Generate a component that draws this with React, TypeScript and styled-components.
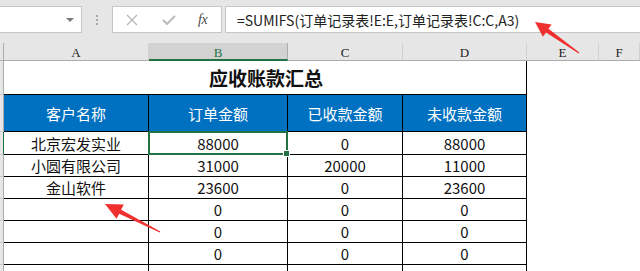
import React from 'react';
import styled, { createGlobalStyle } from 'styled-components';

const Global = createGlobalStyle`
  html, body { margin: 0; padding: 0; background: #fff; }
  body { font-family: "Noto Sans CJK SC", "Noto Sans", sans-serif; overflow: hidden; }
  * { box-sizing: border-box; }
`;

const COLS = '4px 145px 139px 115px 124px 72px 1fr';
const GREEN = '#217346';

const Page = styled.div`
  position: relative;
  width: 640px;
  height: 271px;
  overflow: hidden;
  background: #fff;
`;

const Toolbar = styled.div`
  height: 43px;
  background: #e6e6e6;
  display: flex;
  align-items: flex-start;
  padding-top: 6px;
`;

const NameBox = styled.div`
  width: 82px;
  height: 27px;
  background: #fff;
  border: 1px solid #c6c6c6;
  border-left: none;
  display: flex;
  align-items: center;
  justify-content: flex-end;
  padding-right: 7px;
`;

const Caret = styled.span`
  width: 0;
  height: 0;
  border-left: 4px solid transparent;
  border-right: 4px solid transparent;
  border-top: 4px solid #7a7a7a;
  margin-top: 1px;
`;

const Dots = styled.div`
  width: 30px;
  height: 27px;
  display: flex;
  flex-direction: column;
  align-items: center;
  justify-content: center;
  gap: 2px;
  & > span {
    width: 2px;
    height: 2px;
    background: #a6a6a6;
  }
`;

const FxBox = styled.div`
  width: 110px;
  height: 27px;
  background: #fff;
  border: 1px solid #c6c6c6;
  display: flex;
  align-items: center;
  padding-left: 13px;
`;

const FxBtn = styled.span<{ $w: number }>`
  width: ${(p) => p.$w}px;
  display: flex;
  align-items: center;
  justify-content: flex-start;
`;

const FxLabel = styled.span`
  font-family: "Liberation Serif", "DejaVu Serif", serif;
  font-style: italic;
  font-size: 14px;
  color: #4a4a4a;
  letter-spacing: -0.5px;
  margin-left: 2px;
`;

const FormulaInput = styled.div`
  flex: 1;
  height: 27px;
  margin-left: 3px;
  background: #fff;
  border: 1px solid #c6c6c6;
  border-right: none;
  display: flex;
  align-items: center;
  padding-left: 11px;
  font-size: 14px;
  color: #222;
  white-space: nowrap;
`;

const GridRow = styled.div<{ $h: number }>`
  display: grid;
  grid-template-columns: ${COLS};
  height: ${(p) => p.$h}px;
`;

const Corner = styled.div`
  background: #e6e6e6;
  border-right: 1px solid #ababab;
  border-bottom: 1px solid #ababab;
`;

const ColHead = styled.div<{ $sel?: boolean }>`
  background: ${(p) => (p.$sel ? '#d2d2d2' : '#e6e6e6')};
  border-right: 1px solid ${(p) => (p.$sel ? '#ababab' : '#d0d0d0')};
  border-bottom: ${(p) => (p.$sel ? `2px solid ${GREEN}` : '1px solid #ababab')};
  color: ${(p) => (p.$sel ? GREEN : '#222')};
  font-family: "Liberation Serif", "DejaVu Serif", serif;
  font-size: 13px;
  display: flex;
  align-items: center;
  justify-content: center;
  line-height: 1;
  padding-top: ${(p) => (p.$sel ? 2 : 1)}px;
`;

const RowHead = styled.div<{ $active?: boolean }>`
  background: #e6e6e6;
  border-right: 1px solid ${(p) => (p.$active ? GREEN : '#ababab')};
  border-bottom: 1px solid #c8c8c8;
`;

const TitleCell = styled.div`
  grid-column: span 4;
  border-right: 1px solid #000;
  border-bottom: 1px solid #000;
  display: flex;
  align-items: center;
  justify-content: center;
  font-size: 19px;
  font-weight: 700;
  color: #111;
  padding-left: 2px;
`;

const HeadCell = styled.div`
  background: #0070c0;
  border-right: 1px solid #000;
  border-bottom: 1px solid #000;
  color: #fff;
  font-size: 15px;
  display: flex;
  align-items: center;
  justify-content: center;
`;

const Cell = styled.div<{ $sel?: boolean }>`
  position: relative;
  border-right: 1px solid #000;
  border-bottom: 1px solid #000;
  font-size: 15px;
  color: #111;
  display: flex;
  align-items: center;
  justify-content: center;
  line-height: 1;
  ${(p) =>
    p.$sel &&
    `
    &::after {
      content: '';
      position: absolute;
      left: -1px;
      top: -1px;
      right: -1px;
      bottom: -1px;
      border: 2px solid ${GREEN};
    }
  `}
`;

const Handle = styled.span`
  position: absolute;
  right: -3px;
  bottom: -3px;
  width: 5px;
  height: 5px;
  background: ${GREEN};
  border: 1px solid #fff;
  box-sizing: content-box;
  z-index: 2;
`;

const Blank = styled.div``;

const Overlay = styled.svg`
  position: absolute;
  left: 0;
  top: 0;
  pointer-events: none;
`;

function arrowPoints(tx: number, ty: number, sx: number, sy: number, headLen: number, headHalf: number) {
  const dx = tx - sx;
  const dy = ty - sy;
  const len = Math.hypot(dx, dy);
  const ux = dx / len;
  const uy = dy / len;
  const nx = -uy;
  const ny = ux;
  const bx = tx - ux * headLen;
  const by = ty - uy * headLen;
  const shaft = 2.2;
  const tail = 0.6;
  const pts = [
    [sx + nx * tail, sy + ny * tail],
    [bx + nx * shaft, by + ny * shaft],
    [bx + nx * headHalf, by + ny * headHalf],
    [tx, ty],
    [bx - nx * headHalf, by - ny * headHalf],
    [bx - nx * shaft, by - ny * shaft],
    [sx - nx * tail, sy - ny * tail],
  ];
  return pts.map((p) => `${p[0].toFixed(1)},${p[1].toFixed(1)}`).join(' ');
}

const rows: { name: string; a: string; b: string; c: string; h: number; sel?: boolean }[] = [
  { name: '北京宏发实业', a: '88000', b: '0', c: '88000', h: 23, sel: true },
  { name: '小圆有限公司', a: '31000', b: '20000', c: '11000', h: 22 },
  { name: '金山软件', a: '23600', b: '0', c: '23600', h: 22 },
  { name: '', a: '0', b: '0', c: '0', h: 22 },
  { name: '', a: '0', b: '0', c: '0', h: 22 },
  { name: '', a: '0', b: '0', c: '0', h: 22 },
  { name: '', a: '0', b: '0', c: '0', h: 22 },
];

export default function App() {
  return (
    <Page>
      <Global />
      <Toolbar>
        <NameBox>
          <Caret />
        </NameBox>
        <Dots>
          <span />
          <span />
          <span />
        </Dots>
        <FxBox>
          <FxBtn $w={36}>
            <svg width="12" height="12" viewBox="0 0 12 12">
              <path d="M1 1 L11 11 M11 1 L1 11" stroke="#b8b8b8" strokeWidth="1.4" fill="none" />
            </svg>
          </FxBtn>
          <FxBtn $w={34}>
            <svg width="14" height="12" viewBox="0 0 14 12">
              <path d="M1 6 L5 10 L13 2" stroke="#b8b8b8" strokeWidth="1.8" fill="none" />
            </svg>
          </FxBtn>
          <FxBtn $w={20}>
            <FxLabel>fx</FxLabel>
          </FxBtn>
        </FxBox>
        <FormulaInput>=SUMIFS(订单记录表!E:E,订单记录表!C:C,A3)</FormulaInput>
      </Toolbar>

      <GridRow $h={18}>
        <Corner />
        <ColHead>A</ColHead>
        <ColHead $sel>B</ColHead>
        <ColHead>C</ColHead>
        <ColHead>D</ColHead>
        <ColHead>E</ColHead>
        <ColHead>F</ColHead>
      </GridRow>

      <GridRow $h={34}>
        <RowHead />
        <TitleCell>应收账款汇总</TitleCell>
        <Blank />
        <Blank />
      </GridRow>

      <GridRow $h={37}>
        <RowHead />
        <HeadCell>客户名称</HeadCell>
        <HeadCell>订单金额</HeadCell>
        <HeadCell>已收款金额</HeadCell>
        <HeadCell>未收款金额</HeadCell>
        <Blank />
        <Blank />
      </GridRow>

      {rows.map((r, i) => (
        <GridRow $h={r.h} key={i}>
          <RowHead $active={r.sel} />
          <Cell>{r.name}</Cell>
          <Cell $sel={r.sel}>
            {r.a}
            {r.sel && <Handle />}
          </Cell>
          <Cell>{r.b}</Cell>
          <Cell>{r.c}</Cell>
          <Blank />
          <Blank />
        </GridRow>
      ))}

      <Overlay width={640} height={271}>
        <polygon points={arrowPoints(535, 22, 579, 53, 15, 7.5)} fill="#f0302e" />
        <polygon points={arrowPoints(105, 204, 160, 232, 17, 8)} fill="#f0302e" />
      </Overlay>
    </Page>
  );
}
